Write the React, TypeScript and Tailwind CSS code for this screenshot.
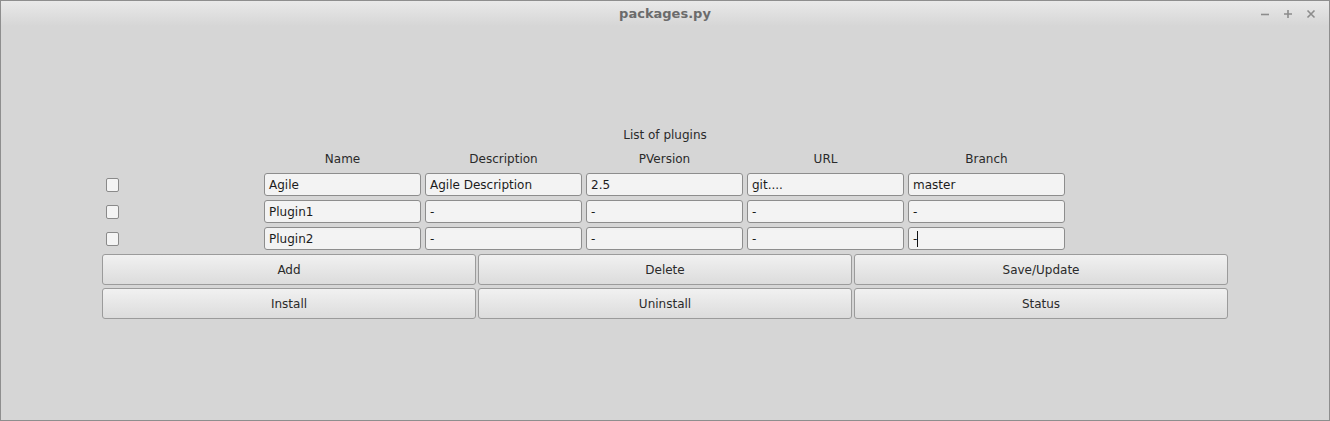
import React from 'react';

const columns = ['Name', 'Description', 'PVersion', 'URL', 'Branch'];

const rows = [
  ['Agile', 'Agile Description', '2.5', 'git....', 'master'],
  ['Plugin1', '-', '-', '-', '-'],
  ['Plugin2', '-', '-', '-', '-'],
];

const buttons = [
  ['Add', 'Delete', 'Save/Update'],
  ['Install', 'Uninstall', 'Status'],
];

const Field: React.FC<{ value: string; caret?: boolean }> = ({ value, caret }) => (
  <div className="w-[157px] h-[23px] flex items-center pl-[4px] bg-[#f3f3f3] border border-[#8d8d8d] rounded-[3px] text-[12px] text-[#1c1c1c] leading-none">
    <span>{value}</span>
    {caret && <span className="inline-block w-px h-[16px] bg-[#111]" />}
  </div>
);

export default function App() {
  return (
    <div className="w-[1330px] h-[421px] bg-[#d6d6d6] border border-[#8e8e8e] flex flex-col font-['DejaVu_Sans',sans-serif] text-[#2a2a2a]">
      {/* Title bar */}
      <div className="relative h-[25px] pt-px bg-gradient-to-b from-[#e9e9e9] to-[#d6d6d6] flex items-center justify-center">
        <span className="text-[13px] font-bold text-[#6b6b6b]">packages.py</span>
        <div className="absolute right-[13px] top-[8px] flex items-center gap-[13px]">
          <svg width="10" height="10" viewBox="0 0 10 10">
            <path d="M1 5.5h8" stroke="#8c8c8c" strokeWidth="1.6" />
          </svg>
          <svg width="10" height="10" viewBox="0 0 10 10">
            <path d="M1 5h8M5 1v8" stroke="#8c8c8c" strokeWidth="1.6" />
          </svg>
          <svg width="10" height="10" viewBox="0 0 10 10">
            <path d="M1.5 1.5l7 7M8.5 1.5l-7 7" stroke="#8c8c8c" strokeWidth="1.6" />
          </svg>
        </div>
      </div>

      {/* Content */}
      <div className="pt-[97px] pl-[101px] flex flex-col text-[12px]">
        <div className="h-[24px] w-[1126px] flex items-center justify-center">List of plugins</div>

        <div className="h-[24px] flex gap-[4px]">
          <div className="w-[158px]" />
          {columns.map((c) => (
            <div key={c} className="w-[157px] flex items-center justify-center">
              {c}
            </div>
          ))}
        </div>

        <div className="mt-[2px] flex flex-col gap-[4px]">
          {rows.map((r, i) => (
            <div key={i} className="flex gap-[4px]">
              <div className="w-[158px] flex items-center pl-[4px]">
                <div className="w-[13px] h-[14px] rounded-[2px] border border-[#8a8a8a] bg-[#f4f4f4]" />
              </div>
              {r.map((v, j) => (
                <Field key={j} value={v} caret={i === 2 && j === 4} />
              ))}
            </div>
          ))}
        </div>

        <div className="mt-[4px] flex flex-col gap-[3px]">
          {buttons.map((br, i) => (
            <div key={i} className="flex gap-[2px]">
              {br.map((b) => (
                <div
                  key={b}
                  className="w-[374px] h-[31px] flex items-center justify-center rounded-[3px] border border-[#9b9b9b] bg-gradient-to-b from-[#f1f1f1] to-[#dcdcdc] text-[#2a2a2a]"
                >
                  {b}
                </div>
              ))}
            </div>
          ))}
        </div>
      </div>
    </div>
  );
}
